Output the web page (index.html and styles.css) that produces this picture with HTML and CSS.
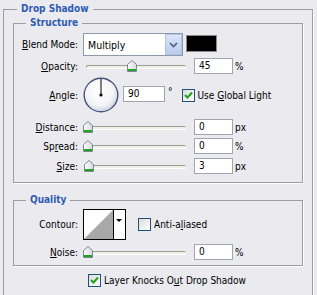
FILE: index.html
```html
<!DOCTYPE html>
<html lang="en">
<head>
    <meta charset="UTF-8">
    <title>Drop Shadow</title>
<link rel="stylesheet" href="styles.css">
</head>
<body>
<fieldset class="panel">
    <legend>Drop Shadow</legend>

    <fieldset class="group structure">
        <legend>Structure</legend>
        <div class="row blend-row">
            <span class="label"><u>B</u>lend Mode:</span>
            <div class="select">
                <span class="select-value">Multiply</span>
                <span class="select-btn">
                    <svg width="9" height="6" viewBox="0 0 9 6"><path d="M1 1 L4.5 4.5 L8 1" fill="none" stroke="#4b5f86" stroke-width="1.6"/></svg>
                </span>
            </div>
            <span class="swatch"></span>
        </div>
        <div class="row opacity-row">
            <span class="label"><u>O</u>pacity:</span>
            <div class="slider"><span class="track"></span><span class="thumb" style="left: 44px"></span></div>
            <span class="field">45</span>
            <span class="unit">%</span>
        </div>
        <div class="row angle-row">
            <span class="label"><u>A</u>ngle:</span>
            <svg class="dial" width="36" height="36" viewBox="0 0 36 36">
                <defs>
                    <radialGradient id="dialFill" cx="45%" cy="40%" r="60%">
                        <stop offset="0" stop-color="#ffffff"/>
                        <stop offset="0.7" stop-color="#f4f4f7"/>
                        <stop offset="1" stop-color="#cfd3df"/>
                    </radialGradient>
                </defs>
                <circle cx="18" cy="18" r="16.8" fill="url(#dialFill)" stroke="#45557c" stroke-width="1.4"/>
                <line x1="18" y1="18" x2="18" y2="2" stroke="#000" stroke-width="1"/>
                <circle cx="18" cy="18" r="1.6" fill="#000"/>
            </svg>
            <span class="field angle-field">90</span>
            <span class="unit">&deg;</span>
            <span class="check checked global"></span>
            <span class="check-label">Use <u>G</u>lobal Light</span>
        </div>
        <div class="row distance-row">
            <span class="label"><u>D</u>istance:</span>
            <div class="slider"><span class="track"></span><span class="thumb" style="left: 0px"></span></div>
            <span class="field">0</span>
            <span class="unit">px</span>
        </div>
        <div class="row spread-row">
            <span class="label">Sp<u>r</u>ead:</span>
            <div class="slider"><span class="track"></span><span class="thumb" style="left: 0px"></span></div>
            <span class="field">0</span>
            <span class="unit">%</span>
        </div>
        <div class="row size-row">
            <span class="label"><u>S</u>ize:</span>
            <div class="slider"><span class="track"></span><span class="thumb" style="left: 1px"></span></div>
            <span class="field">3</span>
            <span class="unit">px</span>
        </div>
    </fieldset>

    <fieldset class="group quality">
        <legend>Quality</legend>
        <div class="row contour-row">
            <span class="label">Contour:</span>
            <svg class="contour" width="43" height="31" viewBox="0 0 43 31">
                <rect x="0.5" y="0.5" width="42" height="30" fill="#fff" stroke="#000"/>
                <polygon points="1,30 30,1 30,30" fill="#a8a8a8"/>
                <line x1="30.5" y1="0" x2="30.5" y2="31" stroke="#000"/>
                <polygon points="33,10 39,10 36,13" fill="#000"/>
            </svg>
            <span class="check anti"></span>
            <span class="check-label">Anti-a<u>l</u>iased</span>
        </div>
        <div class="row noise-row">
            <span class="label"><u>N</u>oise:</span>
            <div class="slider"><span class="track"></span><span class="thumb" style="left: 0px"></span></div>
            <span class="field">0</span>
            <span class="unit">%</span>
        </div>
    </fieldset>

    <div class="row knockout-row">
        <span class="check checked"></span>
        <span class="check-label">Layer Knocks O<u>u</u>t Drop Shadow</span>
    </div>
</fieldset>
</body>
</html>
```

FILE: styles.css
```css
*, *::before, *::after{
    box-sizing: border-box;
}
html, body{
    overflow: hidden;
}
body{
    margin: 0;
    padding: 0;
    background: #ebeaef;
    color: #000;
    font-family: "DejaVu Sans Condensed", "DejaVu Sans", sans-serif;
    font-stretch: condensed;
    font-size: 10px;
}
fieldset{
    margin: 0;
    min-inline-size: 0;
    border: 1px solid #9c9ca2;
    box-shadow: 1px 1px 0 #ffffff;
}
legend{
    padding: 0 4px;
    line-height: 14px;
    height: 14px;
    font-weight: bold;
    color: #2e5db3;
}
.panel{
    margin: 2px 0 0 3px;
    width: 310px;
    padding: 0 9px 20px 9px;
}
.panel > legend{
    margin-left: 4px;
}
.group{
    width: 290px;
    padding: 0;
}
.group > legend{
    margin-left: 12px;
}
.structure{
    padding: 3px 0 8px 0;
}
.quality{
    margin-top: 10px;
    padding: 2px 0 5px 0;
}

.row{
    display: flex;
    align-items: center;
    height: 16px;
}
.label{
    width: 64px;
    text-align: right;
    white-space: nowrap;
}
u{
    text-underline-offset: 1px;
}

/* blend mode */
.blend-row{
    height: 23px;
}
.select{
    margin-left: 5px;
    width: 100px;
    height: 23px;
    border: 1px solid #8e9aab;
    background: #fff;
    display: flex;
    align-items: center;
}
.select-value{
    flex: 1;
    padding-left: 4px;
    font-size: 10.5px;
}
.select-btn{
    width: 17px;
    height: 21px;
    border: 1px solid #b3c3e3;
    background: linear-gradient(#dbe5fa, #b9cbef);
    display: flex;
    align-items: center;
    justify-content: center;
}
.swatch{
    margin-left: 3px;
    margin-top: -2px;
    width: 31px;
    height: 17px;
    background: #000;
    border: 1px solid #8a8a8a;
}

/* sliders */
.slider{
    position: relative;
    margin-left: 5px;
    width: 109px;
    height: 16px;
}
.track{
    position: absolute;
    left: 3px;
    right: 6px;
    top: 7px;
    height: 3px;
    border-radius: 2px;
    border-top: 1px solid #9d9d98;
    border-left: 1px solid #9d9d98;
    background: #f1f0e6;
    box-shadow: 0 1px 0 #ffffff;
}
.thumb{
    position: absolute;
    top: 2px;
    width: 10px;
    height: 12px;
    background: url("data:image/svg+xml,%3Csvg xmlns='http://www.w3.org/2000/svg' width='10' height='12'%3E%3Cdefs%3E%3ClinearGradient id='g' x1='0' y1='0' x2='1' y2='0'%3E%3Cstop offset='0' stop-color='%23ffffff'/%3E%3Cstop offset='1' stop-color='%23d8d8dc'/%3E%3C/linearGradient%3E%3C/defs%3E%3Cpath d='M5 0.5 L9.5 4.5 V11.5 H0.5 V4.5 Z' fill='url(%23g)' stroke='%237b8796'/%3E%3Crect x='1' y='9' width='8' height='2' fill='%2321a324'/%3E%3C/svg%3E") no-repeat;
}

/* number fields */
.field{
    margin-left: 2px;
    width: 39px;
    height: 16px;
    line-height: 14px;
    padding-left: 4px;
    border: 1px solid #9ea6ae;
    background: #fff;
}
.unit{
    margin-left: 2px;
}

/* row spacing */
.opacity-row{
    margin-top: 2px;
}
.angle-row{
    margin-top: 3px;
    height: 36px;
}
.distance-row{
    margin-top: 6px;
}
.spread-row{
    margin-top: 3px;
}
.size-row{
    margin-top: 4px;
}

/* angle */
.dial{
    margin-left: 5px;
}
.angle-field{
    margin-left: 4px;
    width: 42px;
    margin-top: -3px;
}
.angle-row .unit{
    margin-left: 3px;
    align-self: flex-start;
    margin-top: 9px;
}
.global{
    margin-left: 9px;
}

/* checkboxes */
.check{
    width: 13px;
    height: 13px;
    border: 1px solid #1c5180;
    background: linear-gradient(135deg, #dcdcd6, #ffffff);
}
.check.checked{
    background: url("data:image/svg+xml,%3Csvg xmlns='http://www.w3.org/2000/svg' width='11' height='11'%3E%3Cpath d='M2 5 L4.5 7.5 L9 2.5' fill='none' stroke='%2321a121' stroke-width='2'/%3E%3C/svg%3E") no-repeat center, linear-gradient(135deg, #dcdcd6, #ffffff);
}
.check-label{
    margin-left: 3px;
    white-space: nowrap;
}

/* quality */
.contour-row{
    height: 31px;
}
.contour{
    margin-left: 5px;
}
.anti{
    margin-left: 12px;
}
.noise-row{
    margin-top: 4px;
}
.knockout-row{
    margin-top: 8px;
    padding-left: 75px;
    height: 13px;
}
```
